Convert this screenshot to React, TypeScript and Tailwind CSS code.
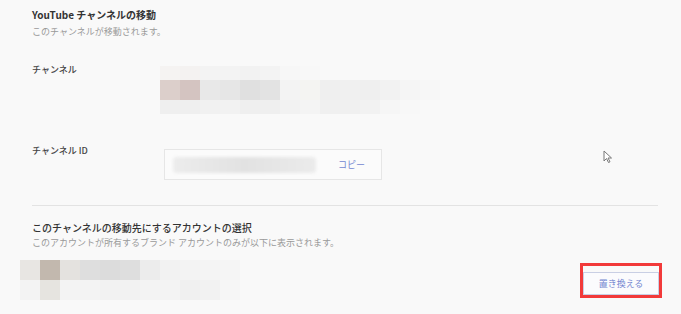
const FONT = { fontFamily: '"Noto Sans CJK JP", "Noto Sans", sans-serif' };

// blurred (mosaic) channel image
const CH_TOP = ["#f5f3f2", "#f4f2f1", "#f3f3f3", "#f3f3f3", "#f2f2f2", "#f3f3f3", "#f7f7f7", "#f8f8f8", "#f9f9f9", "#f9f9f9", "#f9f9f9", "#f9f9f9"];
const CH_MID = ["#dccfcb", "#d4c4c1", "#e8e8e8", "#e6e6e6", "#e0e0e0", "#e3e3e3", "#f3f3f3", "#f4f4f2", "#efefef", "#f0f0f0", "#efefef", "#f2f2f2", "#f5f5f5", "#f7f7f7"];
const CH_BOT = ["#efefef", "#efefef", "#f1f1f1", "#f2f2f2", "#efefef", "#efefef", "#f2f2f2", "#f4f4f4", "#f0f0f0", "#f0f0f0", "#f2f2f2", "#f6f6f6", "#f8f8f8", "#f9f9f9"];

// blurred account row
const AC_MID = ["#e8e6e3", "#c2b8ae", "#e4e2df", "#dedede", "#dcdcdc", "#dedede", "#ececec", "#f2f2f2", "#f3f3f3", "#f4f4f4", "#f5f5f5"];
const AC_BOT = ["#f3f3f3", "#e6e4e0", "#f3f3f3", "#f3f3f3", "#f2f2f2", "#f2f2f2", "#f3f3f3", "#f3f3f3", "#f0f0f0", "#f2f2f2", "#f6f6f6"];

function Mosaic({ rows }: { rows: { h: number; colors: string[] }[] }) {
  return (
    <div className="flex flex-col blur-[0.6px]">
      {rows.map((r, i) => (
        <div key={i} className="flex">
          {r.colors.map((c, j) => (
            <div key={j} className="w-5 shrink-0" style={{ height: r.h, background: c }} />
          ))}
        </div>
      ))}
    </div>
  );
}

export default function App() {
  return (
    <div className="relative w-[681px] h-[314px] overflow-hidden bg-[#f9f9f9]" style={FONT}>
      <div className="pl-8 pt-2">
        <div className="text-[10px] leading-[14px] font-bold text-[#333]">YouTube チャンネルの移動</div>
        <div className="mt-[3px] text-[9px] leading-[13px] text-[#9a9a9a]">このチャンネルが移動されます。</div>

        <div className="mt-[25px] flex">
          <div className="w-32 shrink-0 text-[9px] leading-[13px] font-medium text-[#444]">チャンネル</div>
          <div className="mt-[3px]">
            <Mosaic
              rows={[
                { h: 14, colors: CH_TOP },
                { h: 20, colors: CH_MID },
                { h: 14, colors: CH_BOT },
              ]}
            />
          </div>
        </div>

        <div className="mt-[29px] flex items-start">
          <div className="w-[132px] shrink-0 pt-[1px] text-[9px] leading-[13px] font-medium text-[#444]">チャンネル ID</div>
          <div className="mt-[6px] w-[218px] h-[31px] border border-[#e6e6e6] bg-[#fbfbfb] flex items-center pl-2 pr-4">
            <div className="w-[143px] h-[16px] rounded-sm bg-gradient-to-r from-[#ececec] via-[#e2e2e2] to-[#ebebeb] blur-[1.5px]" />
            <div className="ml-auto text-[9px] text-[#7387d1]">コピー</div>
          </div>
        </div>

        <div className="mt-[25px] w-[626px] h-px bg-[#e3e3e3]" />

        <div className="mt-[15px] text-[10px] leading-[14px] font-medium text-[#333]">
          このチャンネルの移動先にするアカウントの選択
        </div>
        <div className="mt-[1px] text-[9px] leading-[13px] text-[#9a9a9a]">
          このアカウントが所有するブランド アカウントのみが以下に表示されます。
        </div>

        <div className="-ml-3 mt-[6px] flex items-start pr-[19px]">
          <div className="mt-[5px]">
            <Mosaic
              rows={[
                { h: 20, colors: AC_MID },
                { h: 20, colors: AC_BOT },
              ]}
            />
          </div>
          <div className="ml-auto mt-[8px] border-[3px] border-[#f23a3a] bg-[#f9f9f9] pt-[2px]">
            <button className="w-[76px] h-[23px] border border-[#c9cfe4] bg-[#fbfbfd] text-[9px] text-[#7387d1]">
              置き換える
            </button>
          </div>
        </div>
      </div>

      <svg className="absolute left-[603px] top-[150px]" width="10" height="14" viewBox="0 0 10 14">
        <path d="M1 1 L1 11 L3.5 8.5 L5.5 12.5 L7 11.8 L5 8 L8.5 8 Z" fill="#fff" stroke="#777" strokeWidth="1" strokeLinejoin="round" />
      </svg>
    </div>
  );
}
